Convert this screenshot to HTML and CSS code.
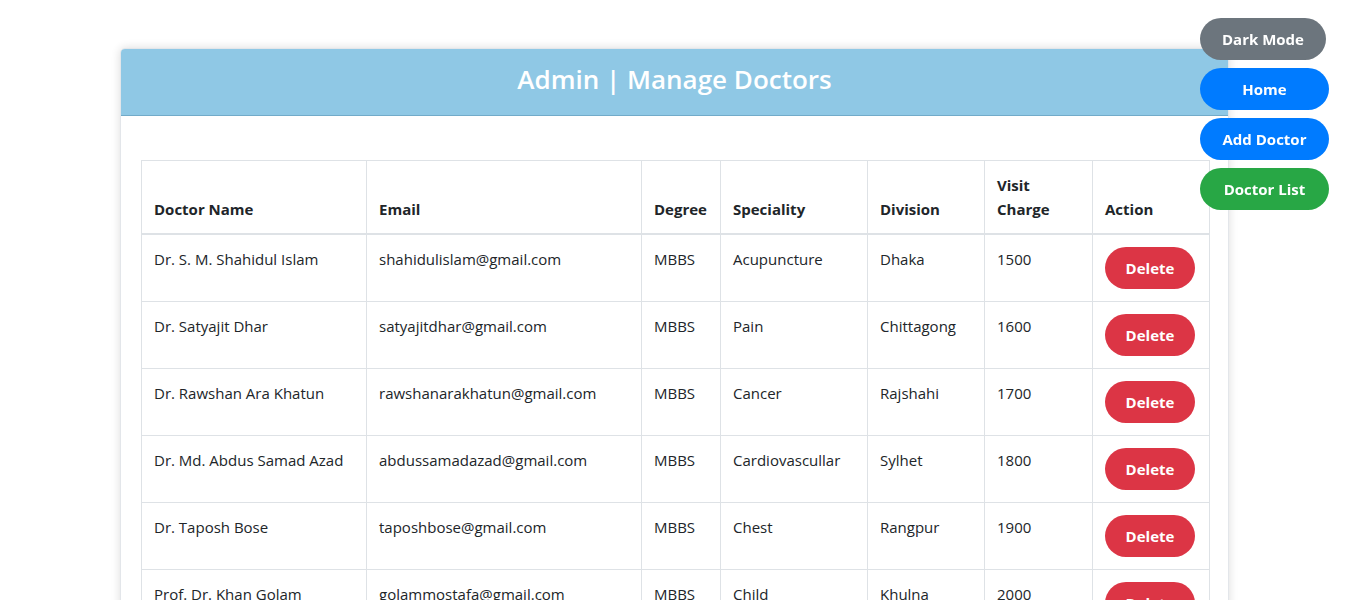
FILE: index.html
```html
<!DOCTYPE html>
<html lang="en">
<head>
<meta charset="utf-8">
<title>Admin | Manage Doctors</title>
<link rel="stylesheet" href="styles.css">
</head>
<body>
<div class="side-nav">
  <button class="pill gray">Dark Mode</button>
  <button class="pill blue">Home</button>
  <button class="pill blue">Add Doctor</button>
  <button class="pill green">Doctor List</button>
</div>
<div class="card">
  <div class="card-header"><h2 class="title">Admin | Manage Doctors</h2></div>
  <div class="card-body">
    <table class="doctors">
      <colgroup>
        <col class="c-name"><col class="c-email"><col class="c-degree"><col class="c-spec"><col class="c-div"><col class="c-charge"><col class="c-action">
      </colgroup>
      <thead>
        <tr><th>Doctor Name</th><th>Email</th><th>Degree</th><th>Speciality</th><th>Division</th><th>Visit Charge</th><th>Action</th></tr>
      </thead>
      <tbody>
        <tr><td>Dr. S. M. Shahidul Islam</td><td>shahidulislam@gmail.com</td><td>MBBS</td><td>Acupuncture</td><td>Dhaka</td><td>1500</td><td><button class="del">Delete</button></td></tr>
        <tr><td>Dr. Satyajit Dhar</td><td>satyajitdhar@gmail.com</td><td>MBBS</td><td>Pain</td><td>Chittagong</td><td>1600</td><td><button class="del">Delete</button></td></tr>
        <tr><td>Dr. Rawshan Ara Khatun</td><td>rawshanarakhatun@gmail.com</td><td>MBBS</td><td>Cancer</td><td>Rajshahi</td><td>1700</td><td><button class="del">Delete</button></td></tr>
        <tr><td>Dr. Md. Abdus Samad Azad</td><td>abdussamadazad@gmail.com</td><td>MBBS</td><td>Cardiovascullar</td><td>Sylhet</td><td>1800</td><td><button class="del">Delete</button></td></tr>
        <tr><td>Dr. Taposh Bose</td><td>taposhbose@gmail.com</td><td>MBBS</td><td>Chest</td><td>Rangpur</td><td>1900</td><td><button class="del">Delete</button></td></tr>
        <tr><td>Prof. Dr. Khan Golam Mostafa</td><td>golammostafa@gmail.com</td><td>MBBS</td><td>Child</td><td>Khulna</td><td>2000</td><td><button class="del">Delete</button></td></tr>
      </tbody>
    </table>
  </div>
</div>
</body>
</html>
```
FILE: styles.css
```css
* { box-sizing: border-box; }
body {
  margin: 0;
  font-family: "Open Sans", "Noto Sans", sans-serif;
  font-size: 15px;
  line-height: 24px;
  color: #212529;
  background: #fff;
}
.side-nav {
  position: fixed;
  top: 18px;
  left: 1200px;
  display: flex;
  flex-direction: column;
  align-items: flex-start;
  gap: 8px;
  z-index: 10;
}
.pill {
  border: 1px solid transparent;
  border-radius: 21px;
  height: 42px;
  padding: 0 20px;
  font-family: inherit;
  font-size: 15px;
  font-weight: 700;
  color: #fff;
  cursor: pointer;
}
.pill.gray { background: #6c757d; width: 126px; }
.pill.blue { background: #007bff; width: 129px; }
.pill.green { background: #28a745; width: 129px; }
.card {
  width: 1109px;
  margin: 48px auto 0 120px;
  border: 1px solid #e3e6ea;
  border-radius: 5px;
  box-shadow: 0 0 10px rgba(0,0,0,0.14);
  background: #fff;
}
.card-header {
  background: #8fc8e5;
  border-bottom: 1px solid #72abc9;
  border-radius: 4px 4px 0 0;
  height: 67px;
  padding-bottom: 6px;
  display: flex;
  align-items: center;
  justify-content: center;
}
.title {
  margin: 0;
  color: #fff;
  font-size: 26px;
  font-weight: 600;
  line-height: 34px;
}
.card-body {
  padding: 44px 20px 20px;
}
.doctors {
  width: 1068px;
  border-collapse: collapse;
  table-layout: fixed;
}
.c-name { width: 225px; }
.c-email { width: 275px; }
.c-degree { width: 79px; }
.c-spec { width: 147px; }
.c-div { width: 117px; }
.c-charge { width: 108px; }
.c-action { width: 117px; }
.doctors th, .doctors td {
  border: 1px solid #dee2e6;
  padding: 12px;
  text-align: left;
  vertical-align: top;
}
.doctors th {
  font-weight: 700;
  vertical-align: bottom;
  border-bottom: 2px solid #dee2e6;
}
.doctors td { height: 67px; }
.del {
  background: #dc3545;
  color: #fff;
  border: 1px solid transparent;
  border-radius: 21px;
  width: 90px;
  height: 42px;
  padding: 0;
  font-family: inherit;
  font-size: 15px;
  font-weight: 700;
  cursor: pointer;
}
```
